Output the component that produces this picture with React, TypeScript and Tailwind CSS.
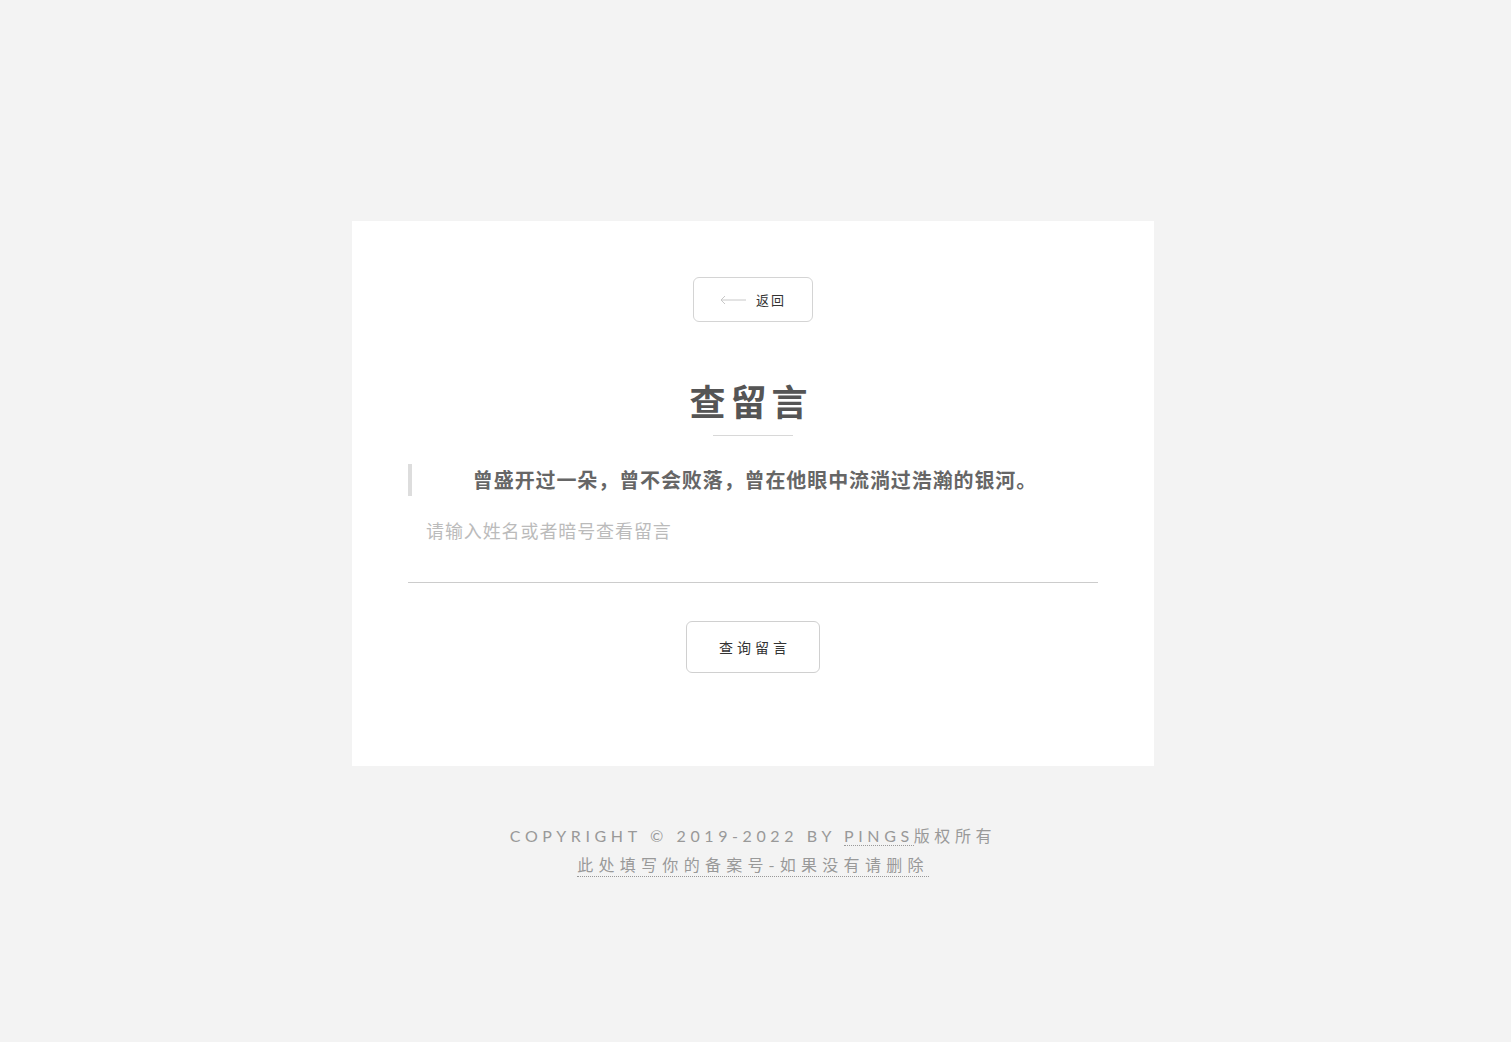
const FONT = { fontFamily: '"Noto Sans CJK SC", "Noto Sans", sans-serif' };
const LATIN = { fontFamily: 'Lato, "Noto Sans CJK SC", sans-serif' };

const App = () => {
    return (
        <div className="min-h-screen bg-[#f3f3f3] flex flex-col items-center pt-[221px] pr-[5px]" style={FONT}>
            {/* Card */}
            <div className="w-[802px] bg-white px-14 pt-14 pb-[93px] flex flex-col items-center">
                <button className="w-[120px] h-[45px] border border-[#d4d4d4] rounded-md flex items-center justify-center gap-[10px] text-[13px] tracking-[2px] text-[#333]">
                    <svg width="26" height="10" viewBox="0 0 26 10" fill="none" stroke="#c8c8c8" strokeWidth="1">
                        <path d="M1 5 H26 M5 1 L1 5 L5 9" />
                    </svg>
                    <span>返回</span>
                </button>

                {/* Title */}
                <h1 className="mt-[54px] text-[36px] font-bold tracking-[5px] text-[#555] leading-[48px] pr-[4px]">
                    查留言
                </h1>
                <div className="mt-[11px] w-20 h-px bg-[#d8d8d8]" />

                {/* Quote */}
                <div className="mt-7 w-full border-l-4 border-[#ddd] h-[32px] flex items-center justify-center">
                    <p className="text-[20px] font-bold tracking-[0.9px] text-[#666] leading-none">
                        曾盛开过一朵，曾不会败落，曾在他眼中流淌过浩瀚的银河。
                    </p>
                </div>

                {/* Input */}
                <input
                    className="mt-[18px] w-full h-[69px] pb-[36px] pl-[18px] border-b border-[#ccc] text-[18px] tracking-[0.9px] text-[#555] placeholder:text-[#bbb] outline-none"
                    placeholder="请输入姓名或者暗号查看留言"
                />

                <button className="mt-[38px] w-[134px] h-[52px] border border-[#d0d0d0] rounded-md text-[14px] tracking-[4px] pl-[4px] text-[#333]">
                    查询留言
                </button>
            </div>

            {/* Footer */}
            <div className="mt-[55px] flex flex-col items-center text-[16px] text-[#999] leading-[29px]" style={LATIN}>
                <p className="tracking-[4.6px]">
                    COPYRIGHT © 2019-2022 BY{' '}
                    <a className="border-b border-dotted border-[#999]">PINGS</a>
                    <span style={FONT}>版权所有</span>
                </p>
                <p className="tracking-[5.3px]" style={FONT}>
                    <a className="border-b border-dotted border-[#999]">此处填写你的备案号-如果没有请删除</a>
                </p>
            </div>
        </div>
    );
};

export default App;
